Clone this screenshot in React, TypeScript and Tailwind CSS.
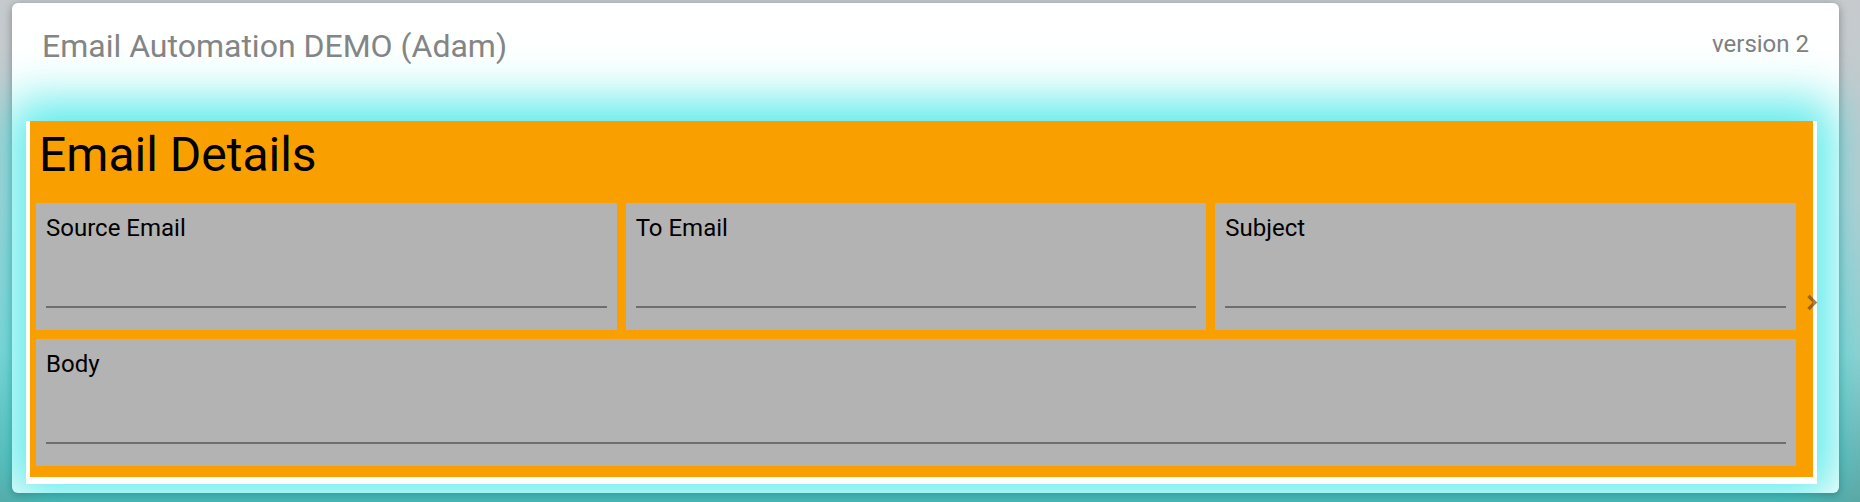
import React from "react";

function Field({ label, className = "" }: { label: string; className?: string }) {
  return (
    <div className={`h-[127px] bg-[#b3b3b3] pt-[13px] px-[10px] flex flex-col ${className}`}>
      <div className="text-[24px] leading-none text-black">{label}</div>
      <div className="mt-auto mb-[22px] h-[2px] bg-[#6e6e6e]" />
    </div>
  );
}

export default function App() {
  return (
    <div className="h-[502px] w-full overflow-hidden bg-[linear-gradient(180deg,#c6cacd_0%,#bcccd0_40%,#98cfd0_70%,#5ea6a3_100%)] pt-[3px] pl-[12px] pr-[21px] font-['Roboto',sans-serif]">
      <div className="h-[490px] rounded-[6px] bg-white shadow-[0_2px_8px_rgba(0,0,0,0.35)] flex flex-col">
        <div className="pt-[27px] pl-[30px] pr-[30px] flex justify-between items-start">
          <div className="text-[32px] leading-none text-[#858585]">Email Automation DEMO (Adam)</div>
          <div className="text-[24px] leading-none mt-[2px] text-[#808080]">version 2</div>
        </div>
        <div className="mt-[59px] ml-[14px] mr-[22px] bg-white px-[4px] pb-[7px] shadow-[0_-4px_45px_16px_rgba(20,225,225,0.7)]">
          <div className="relative bg-[#fa9f00] pt-[10px] pl-[6px] pr-[17px] pb-[11px]">
            <div className="pl-[3px] text-[48px] leading-none text-black">Email Details</div>
            <div className="mt-[24px] grid grid-cols-3 gap-[9px]">
              <Field label="Source Email" />
              <Field label="To Email" />
              <Field label="Subject" />
              <Field label="Body" className="col-span-3" />
            </div>
            <svg
              className="absolute right-[-5px] top-[173px]"
              width="12"
              height="17"
              viewBox="0 0 12 17"
              fill="none"
            >
              <path d="M2.5 2 L9 8.5 L2.5 15" stroke="rgba(100,65,15,0.65)" strokeWidth="3.2" strokeLinecap="butt" strokeLinejoin="miter" />
            </svg>
          </div>
        </div>
      </div>
    </div>
  );
}
